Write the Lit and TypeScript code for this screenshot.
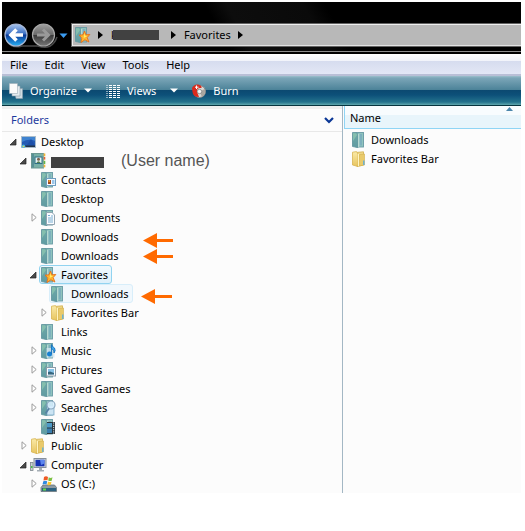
import { LitElement, html, svg, css, nothing, TemplateResult, SVGTemplateResult } from "lit";
import { customElement, property, state } from "lit/decorators.js";
import { classMap } from "lit/directives/class-map.js";

interface TreeNode {
  label: string;
  icon: string;
  level: number;
  toggle?: "open" | "closed";
  look?: "selected" | "hover";
  hidden?: boolean;
  note?: string;
}

const NODES: TreeNode[] = [
  { label: "Desktop", icon: "desktop", level: 0, toggle: "open" },
  { label: "", icon: "user", level: 1, toggle: "open", hidden: true, note: "(User name)" },
  { label: "Contacts", icon: "contacts", level: 2 },
  { label: "Desktop", icon: "folder", level: 2 },
  { label: "Documents", icon: "documents", level: 2, toggle: "closed" },
  { label: "Downloads", icon: "folder", level: 2 },
  { label: "Downloads", icon: "folder", level: 2 },
  { label: "Favorites", icon: "favorites", level: 2, toggle: "open", look: "selected" },
  { label: "Downloads", icon: "folder", level: 3, look: "hover" },
  { label: "Favorites Bar", icon: "yellow", level: 3, toggle: "closed" },
  { label: "Links", icon: "folder", level: 2 },
  { label: "Music", icon: "music", level: 2, toggle: "closed" },
  { label: "Pictures", icon: "pictures", level: 2, toggle: "closed" },
  { label: "Saved Games", icon: "folder", level: 2, toggle: "closed" },
  { label: "Searches", icon: "searches", level: 2, toggle: "closed" },
  { label: "Videos", icon: "videos", level: 2 },
  { label: "Public", icon: "yellow", level: 1, toggle: "closed" },
  { label: "Computer", icon: "computer", level: 1, toggle: "open" },
  { label: "OS (C:)", icon: "drive", level: 2, toggle: "closed" },
];

const tealFolder = svg`
  <rect x="4" y=".5" width="7.500" height="14.500" fill="#8fc4bd" stroke="#6799a4" stroke-width=".9"/>
  <rect x="7.500" y="2" width="2.500" height="11.500" fill="#7db0bd"/>
  <path d="M.5 .5H4.500L6 2.500V15.500L.5 14.500Z" fill="url(#teal)" stroke="#6497a0" stroke-width=".9"/>
  <path d="M1 1.200H4L5 3L1 9Z" fill="#8fc9b0" opacity=".7"/>
  <path d="M6.700 2V15" stroke="#cfe9df" stroke-width=".9"/>`;

const ICONS: Record<string, SVGTemplateResult> = {
  folder: tealFolder,
  yellow: svg`
    <path d="M3.500 1.500L11.500 .8V14L5 15.500Z" fill="#f0d98a" stroke="#d1ae4c" stroke-width=".8"/>
    <path d="M7.500 3.500L12.500 3V14L7 15Z" fill="#e9ca6a" stroke="#d1ae4c" stroke-width=".6"/>
    <path d="M.5 1.200L4.500 .6L6 3V15.500L.5 14Z" fill="url(#gold)" stroke="#d8b553" stroke-width=".8"/>
    <path d="M6.500 3V15" stroke="#fff4c0"/>
    <path d="M11.800 9.500V14" stroke="#5caee0" stroke-width="1.300"/>`,
  desktop: svg`
    <rect x=".5" y="2.500" width="14" height="11" fill="#245ab4" stroke="#a9bccb"/>
    <path d="M1 3H14V7Q8 4 1 8Z" fill="#3f83d0"/>
    <path d="M6 11L10 5L13 10L14 12H5Z" fill="#1c4fa8"/>
    <rect x="1" y="11.500" width="13" height="1.500" fill="#22344a"/>
    <circle cx="2.500" cy="12.200" r="1.800" fill="#48b4dc"/><circle cx="2.500" cy="12.500" r=".8" fill="#f8d640"/>`,
  user: svg`
    <rect x=".5" y=".5" width="12" height="14.500" fill="#79b0a6" stroke="#6a9791"/>
    <path d="M1 1H3V14.500H1Z" fill="#568f96"/>
    <rect x="4" y="4" width="7" height="6.500" fill="#e8f4f4" stroke="#2f6e86"/>
    <circle cx="7.500" cy="6.300" r="1.500" fill="#7b624d"/><path d="M5.300 10Q7.500 6.500 9.700 10Z" fill="#547f4e"/>
    <path d="M13.500 .5V15" stroke="#f6e7b8" stroke-width="1.500"/>
    <path d="M13.500 .5V3M13.500 12V14" stroke="#f2b535" stroke-width="1.500"/>
    <path d="M13.500 4V6.500" stroke="#e25f38" stroke-width="1.500"/><path d="M13.500 8V11" stroke="#60b74b" stroke-width="1.500"/>`,
  contacts: svg`${tealFolder}
    <rect x="5.500" y="6.500" width="9" height="7" fill="#f5faff" stroke="#6e9dc0"/>
    <rect x="7" y="8" width="3" height="4" fill="#9b4c22"/><rect x="7.500" y="8" width="1.500" height="2" fill="#f39b2f"/>
    <path d="M11 9H13.500M11 11H13.500" stroke="#3e90d5"/>`,
  documents: svg`${tealFolder}
    <path d="M5.500 2.500H11L13.500 5V14.500H5.500Z" fill="#fafcff" stroke="#93a5b2"/>
    <path d="M7 5.500H9M10 6H12M7 8H12M7 10H12M7 12H12" stroke="#78aed2"/>`,
  favorites: svg`${tealFolder}
    <path d="M9.500 4L10.900 7.800L14.800 7.500L12.200 10.500L13.900 15L9.900 12.800L6 15.500L6.800 10.900L4 8.200L8 7.800Z" fill="#ffb62d" stroke="#e66d18" stroke-width=".9"/>
    <path d="M9.500 6L10.200 8.800L12.200 9L8.700 11Z" fill="#fff06a"/>`,
  music: svg`${tealFolder}
    <rect x="5.500" y="5" width="8" height="9.500" fill="#cfe4ee" opacity=".8"/>
    <circle cx="8.500" cy="11" r="2.500" fill="#1781d2"/><path d="M10.500 11V1.500Q11 3.500 13.500 5Q15 7.500 13 10Q13.500 6.500 10.500 5.500" fill="#3fa9ed" stroke="#1471bd" stroke-width=".9"/>`,
  pictures: svg`${tealFolder}
    <rect x="5.500" y="5.500" width="9" height="8.500" fill="#fbfdff" stroke="#8c9ca8"/>
    <rect x="7" y="7" width="6" height="5.500" fill="#87c2e6"/><path d="M7 12.500V10L9 9.500L13 11V12.500Z" fill="#35647c"/>`,
  searches: svg`${tealFolder}
    <rect x="6" y="6" width="7" height="9" fill="#cbe4f3" stroke="#6c9dbd" stroke-width=".7"/>
    <circle cx="10" cy="5" r="4" fill="#d9f0ff" fill-opacity=".85" stroke="#8aa6be" stroke-width="1.200"/>
    <path d="M8 8.500L4.500 13.500" stroke="#5681a4" stroke-width="1.800"/>`,
  videos: svg`${tealFolder}
    <rect x="6" y="3" width="8" height="12" fill="#29363d"/>
    <rect x="6" y="4" width="5" height="4.500" fill="#4d9ac8"/><rect x="6" y="9.500" width="5" height="4.500" fill="#397eae"/>
    <path d="M12.700 3.500V15" stroke="#e3e8eb" stroke-width="1" stroke-dasharray="1.200 1"/>`,
  computer: svg`
    <rect x="-.5" y="5.500" width="2.500" height="8" fill="#c9d0d4" stroke="#7c868c" stroke-width=".8"/>
    <rect x="0" y="9" width="1.500" height="2" fill="#4bbb4e"/>
    <rect x="3" y="1.500" width="12" height="9" fill="#d0d6dc" stroke="#87919c"/>
    <rect x="4.500" y="2.800" width="9" height="6.500" fill="#1532b4"/><path d="M9 2.800H13.500V6.500L10 8Z" fill="#5c86ee"/>
    <path d="M8 11H11V13H13V14.500H6V13H8Z" fill="#a5aeb5"/>`,
  drive: svg`
    <path d="M2 9H13.500L15.500 11.500V15.500H0V11.500Z" fill="#8d9ba4" stroke="#65727a" stroke-width=".8"/>
    <rect x="1" y="12" width="14" height="3" fill="#2d6280"/><rect x="2" y="12.500" width="3" height="2" fill="#64dc45"/>
    <path d="M3 1Q5 -.5 7 1L6.500 4.300Q4.500 3.500 2.500 4.500Z" fill="#ee5a24"/>
    <path d="M7.800 1.300Q9.500 2.500 11.500 1.200L10.700 4.700Q9 5.500 7.200 4.500Z" fill="#7cc043"/>
    <path d="M2.300 5.200Q4 4.200 6.200 5.200L5.500 8.500Q3.500 7.500 1.500 8.500Z" fill="#2f8be0"/>
    <path d="M7 5.500Q8.700 6.500 10.500 5.700L9.800 8.800Q8 9.700 6.300 8.700Z" fill="#fbc62a"/>`,
};

@customElement("x-icon")
export class XIcon extends LitElement {
  @property() name = "folder";
  static styles = css`
    :host { display: block; flex: none; width: 16px; height: 16px; }
    svg { display: block; overflow: visible; }
  `;
  render() {
    return html`<svg width="16" height="16" viewBox="0 0 16 16" aria-hidden="true">
      <defs>
        <linearGradient id="teal" x2="0" y2="1"><stop stop-color="#70aaa8" /><stop offset="1" stop-color="#5f9ba2" /></linearGradient>
        <linearGradient id="gold" x2="0" y2="1"><stop stop-color="#faeaa8" /><stop offset="1" stop-color="#e7c45e" /></linearGradient>
      </defs>
      ${ICONS[this.name]}
    </svg>`;
  }
}

@customElement("app-root")
export class AppRoot extends LitElement {
  @state() private nodes = NODES;

  static styles = css`
    :host {
      display: block;
      box-sizing: border-box;
      min-height: 100vh;
      padding: 2px 4px 0 2px;
      background: #fff;
      color: #000;
      font: 11px/18px "Noto Sans", "Open Sans", sans-serif;
    }
    * { box-sizing: border-box; }
    svg { display: block; flex: none; }
    button { margin: 0; padding: 0; border: 0; background: none; color: inherit; font: inherit; }
    a { color: inherit; text-decoration: none; }
    ul { margin: 0; padding: 0; list-style: none; }

    .chrome {
      display: flex;
      align-items: center;
      height: 52px;
      padding: 15px 0 0 2px;
      border-bottom: 1px solid #000;
      background: linear-gradient(#0000 49px, #8b8b8b 49px, #8b8b8b 50px, #000 50px),
        linear-gradient(60deg, #000 42%, #0d0d0d 46%, #0a0a0a 60%, #000 64%);
    }
    .history { display: flex; align-items: center; margin-right: 1px; }
    .address {
      display: flex;
      flex: 1;
      align-items: center;
      height: 24px;
      padding-left: 3px;
      border: 1px solid #626262;
      border-right: 0;
      box-shadow: inset 0 1px #eee, inset 1px 0 #eee, inset 0 -1px #e2e2e2;
      background: #b8b8b8;
    }
    .crumb { display: flex; align-items: center; }
    .first { margin-left: 8px; }
    .second { margin-left: 8px; }
    .sep { margin-left: 7px; }
    .sep.wide { margin-left: 12px; }
    .mask { display: block; width: 46px; height: 10px; margin-left: -4px; background: #414141; }
    .mask.big { width: 53px; height: 11px; margin: 3px 0 0; }

    .menu {
      display: flex;
      gap: 17px;
      height: 22px;
      padding-left: 8px;
      border-bottom: 2px solid #b9bfd6;
      background: linear-gradient(#fff, #f1f3fa 7px, #d6dcef 7px, #e3e7f5);
      line-height: 22px;
    }
    .toolbar {
      display: flex;
      align-items: center;
      height: 30px;
      padding-left: 7px;
      border-bottom: 1px solid #06343f;
      background: linear-gradient(#9dc0cc 0, #7ca6b8 2px, #4b8298 14px, #0b4970 14px, #0d5079 19px, #23728c 26px, #5fa7ad);
      color: #fff;
    }
    .tool { display: flex; align-items: center; gap: 7px; }
    .tool + .tool { margin-left: 14px; }
    .spaced { margin-left: 7px; }

    .body { display: grid; grid-template-columns: minmax(0, 341fr) minmax(0, 178fr); background: #fcfcfc; }
    .tree { position: relative; border-right: 1px solid #a3b7c4; }
    .heading {
      display: flex;
      align-items: center;
      justify-content: space-between;
      height: 26px;
      padding: 0 8px 0 9px;
      border-top: 3px solid #efefef;
      border-bottom: 1px solid #e8e8e8;
      color: #1c3a9e;
    }
    .heading h2 { margin: 0; font: inherit; }
    .row { display: flex; align-items: center; height: 19px; padding-left: 6px; }
    .l1 { padding-left: 16px; }
    .l2 { padding-left: 26px; }
    .l3 { padding-left: 36px; }
    .toggle { display: flex; justify-content: center; width: 11px; }
    .item {
      display: flex;
      align-items: center;
      gap: 4px;
      height: 19px;
      padding: 0 3px 0 1px;
      border: 1px solid transparent;
      border-radius: 3px;
    }
    .selected { border-color: #91d3f0; background: linear-gradient(#f3fafe, #dceffa); }
    .hover { border-color: #d8eefa; background: #f1f8fd; }
    .note { margin-left: 13px; color: #555; font: 16px/18px "Liberation Sans", Arial, sans-serif; }
    .arrows { position: absolute; top: 0; left: 0; pointer-events: none; }

    .files { padding-left: 1px; }
    table { width: 100%; border-collapse: separate; border-spacing: 0; }
    th {
      height: 23px;
      padding: 0 8px 0 5px;
      border-left: 1px solid #8fd5f5;
      border-bottom: 1px solid #8fd5f5;
      background: linear-gradient(#f8fcfe 9px, #e8f5fb 9px);
      font-weight: 400;
      text-align: left;
    }
    .sort { display: flex; justify-content: space-between; width: 100%; height: 22px; line-height: 24px; }
    td { height: 19px; padding: 0 0 0 7px; }
    .file { display: flex; align-items: center; gap: 3px; padding-left: 1px; height: 19px; }
    tbody tr:first-child td { padding-top: 1px; }
  `;

  private crumbArrow(cls: string): TemplateResult {
    return html`<svg class="sep ${cls}" width="5" height="8" viewBox="0 0 5 8"><path d="M0 0L5 4L0 8Z" fill="#000" /></svg>`;
  }

  private dropArrow(cls = ""): TemplateResult {
    return html`<svg class=${cls} width="8" height="5" viewBox="0 0 8 5"><path d="M0 .5H8L4 4.500Z" fill="#fff" /></svg>`;
  }

  private flip(n: TreeNode) {
    this.nodes = this.nodes.map((m) => (m === n ? { ...m, toggle: m.toggle === "open" ? "closed" : "open" } : m));
  }

  private row(n: TreeNode): TemplateResult {
    return html`<li class="row l${n.level}">
      ${n.toggle
        ? html`<button class="toggle" aria-label="Toggle ${n.label}" @click=${() => this.flip(n)}>
            ${n.toggle === "open"
              ? html`<svg width="7" height="8" viewBox="0 0 7 8"><path d="M6 1V7H0Z" fill="#4a4a4a" stroke="#222" stroke-width=".7" /></svg>`
              : html`<svg width="6" height="9" viewBox="0 0 6 9"><path d="M1 .8L5.200 4.500L1 8.200Z" fill="#fff" stroke="#9b9b9b" /></svg>`}
          </button>`
        : html`<span class="toggle"></span>`}
      <a href="#" class=${classMap({ item: true, selected: n.look === "selected", hover: n.look === "hover" })}>
        <x-icon name=${n.icon}></x-icon>
        ${n.hidden ? html`<span class="mask big"></span>` : html`<span>${n.label}</span>`}
      </a>
      ${n.note ? html`<span class="note">${n.note}</span>` : nothing}
    </li>`;
  }

  render() {
    return html`
      <header class="chrome">
        <div class="history">
          <button aria-label="Back and forward">
            <svg width="66" height="28" viewBox="0 0 66 28">
              <defs>
                <linearGradient id="blue" x2="0" y2="1">
                  <stop stop-color="#a9c6ef" /><stop offset=".45" stop-color="#3a6fc4" /><stop offset=".5" stop-color="#0a3796" /><stop offset="1" stop-color="#27b0f4" />
                </linearGradient>
                <linearGradient id="gray" x2="0" y2="1">
                  <stop stop-color="#a0a0a0" /><stop offset=".48" stop-color="#6a6a6a" /><stop offset=".52" stop-color="#3a3a3a" /><stop offset="1" stop-color="#777" />
                </linearGradient>
              </defs>
              <path d="M3 20Q8 28 18 25H34Q48 30 53 16" fill="none" stroke="#4a4a4a" stroke-width="1.500" />
              <circle cx="12" cy="14" r="11" fill="url(#blue)" stroke="#a9b9d6" stroke-width="1.200" />
              <path d="M19 14H7M12.500 8.500L7 14L12.500 19.500" fill="none" stroke="#fff" stroke-width="3.600" />
              <circle cx="39.500" cy="14" r="11" fill="url(#gray)" stroke="#a8a8a8" stroke-width="1.200" />
              <path d="M33 14H44M39 8.500L44.500 14L39 19.500" fill="none" stroke="#999" stroke-width="3" />
              <path d="M55.500 12.500H63.500L59.500 17Z" fill="#3b9bf0" />
            </svg>
          </button>
        </div>
        <nav class="address" aria-label="Address">
          <x-icon name="favorites"></x-icon>
          ${this.crumbArrow("lead")}
          <a class="crumb first" href="#"><span>k</span><span class="mask"></span></a>
          ${this.crumbArrow("wide")}
          <a class="crumb second" href="#">Favorites</a>
          ${this.crumbArrow("last")}
        </nav>
      </header>
      <nav class="menu" aria-label="Menu">
        ${["File", "Edit", "View", "Tools", "Help"].map((m) => html`<button>${m}</button>`)}
      </nav>
      <div class="toolbar" role="toolbar">
        <button class="tool">
          <svg width="14" height="16" viewBox="0 0 14 16">
            <path d="M5 5.500H13.500V15.500H7Z" fill="#cfdbe2" stroke="#8ba0ad" stroke-width=".6" />
            <path d="M3 3H11V13H3Z" fill="#e4ebef" stroke="#8ba0ad" stroke-width=".6" />
            <path d="M.3 .5H8.500V10.500H.3Z" fill="#fafafa" stroke="#9cadb7" stroke-width=".6" />
          </svg>
          <span>Organize</span>${this.dropArrow()}
        </button>
        <button class="tool">
          <svg width="14" height="14" viewBox="0 0 14 14">
            <path d="M1 1V14" stroke="#fff" stroke-dasharray="1 1" />
            <path d="M4.500 1V14M8.500 1V14M12.500 1V14" fill="none" stroke="#fff" stroke-width="3" stroke-dasharray="1 1" />
          </svg>
          <span>Views</span>${this.dropArrow("spaced")}
        </button>
        <button class="tool">
          <svg width="14" height="14" viewBox="0 0 14 14">
            <circle cx="7.500" cy="7.500" r="6" fill="#d8d8d4" stroke="#888" />
            <path d="M7.500 7.500L13 5Q14 10 10 13Z" fill="#a9a5a0" />
            <path d="M0 4Q2 0 6 .5Q10 1 9.500 4L7 4Q4 5 5.500 9L7 13Q1 13 .5 8Z" fill="#d92a1d" />
            <circle cx="7.500" cy="7.500" r="2.200" fill="#f7f7f7" stroke="#777" stroke-width=".7" />
            <path d="M4.500 1.500V5M3 3.200H6.500" stroke="#fff" />
          </svg>
          <span>Burn</span>
        </button>
      </div>
      <main class="body">
        <section class="tree">
          <div class="heading">
            <h2>Folders</h2>
            <button aria-label="Collapse folders">
              <svg width="10" height="7" viewBox="0 0 10 7"><path d="M1 1L5 5L9 1" fill="none" stroke="#0b3796" stroke-width="2.200" /></svg>
            </button>
          </div>
          <ul>${this.nodes.map((n) => this.row(n))}</ul>
          <svg class="arrows" width="180" height="200" viewBox="0 0 180 200" fill="#ff6a00" aria-hidden="true">
            <path d="M141 134.500L155 127V133H171V136H155V142Z" />
            <path d="M141 150.500L155 143V149H171V152H155V158Z" />
            <path d="M139 190.500L153 183V189H170V192H153V198Z" />
          </svg>
        </section>
        <section class="files">
          <table>
            <thead>
              <tr><th><button class="sort"><span>Name</span>
                <svg width="7" height="5" viewBox="0 0 7 5"><path d="M0 5L3.500 1L7 5Z" fill="#4b86ab" /></svg>
              </button></th></tr>
            </thead>
            <tbody>
              <tr><td><a class="file" href="#"><x-icon name="folder"></x-icon>Downloads</a></td></tr>
              <tr><td><a class="file" href="#"><x-icon name="yellow"></x-icon>Favorites Bar</a></td></tr>
            </tbody>
          </table>
        </section>
      </main>
    `;
  }
}
